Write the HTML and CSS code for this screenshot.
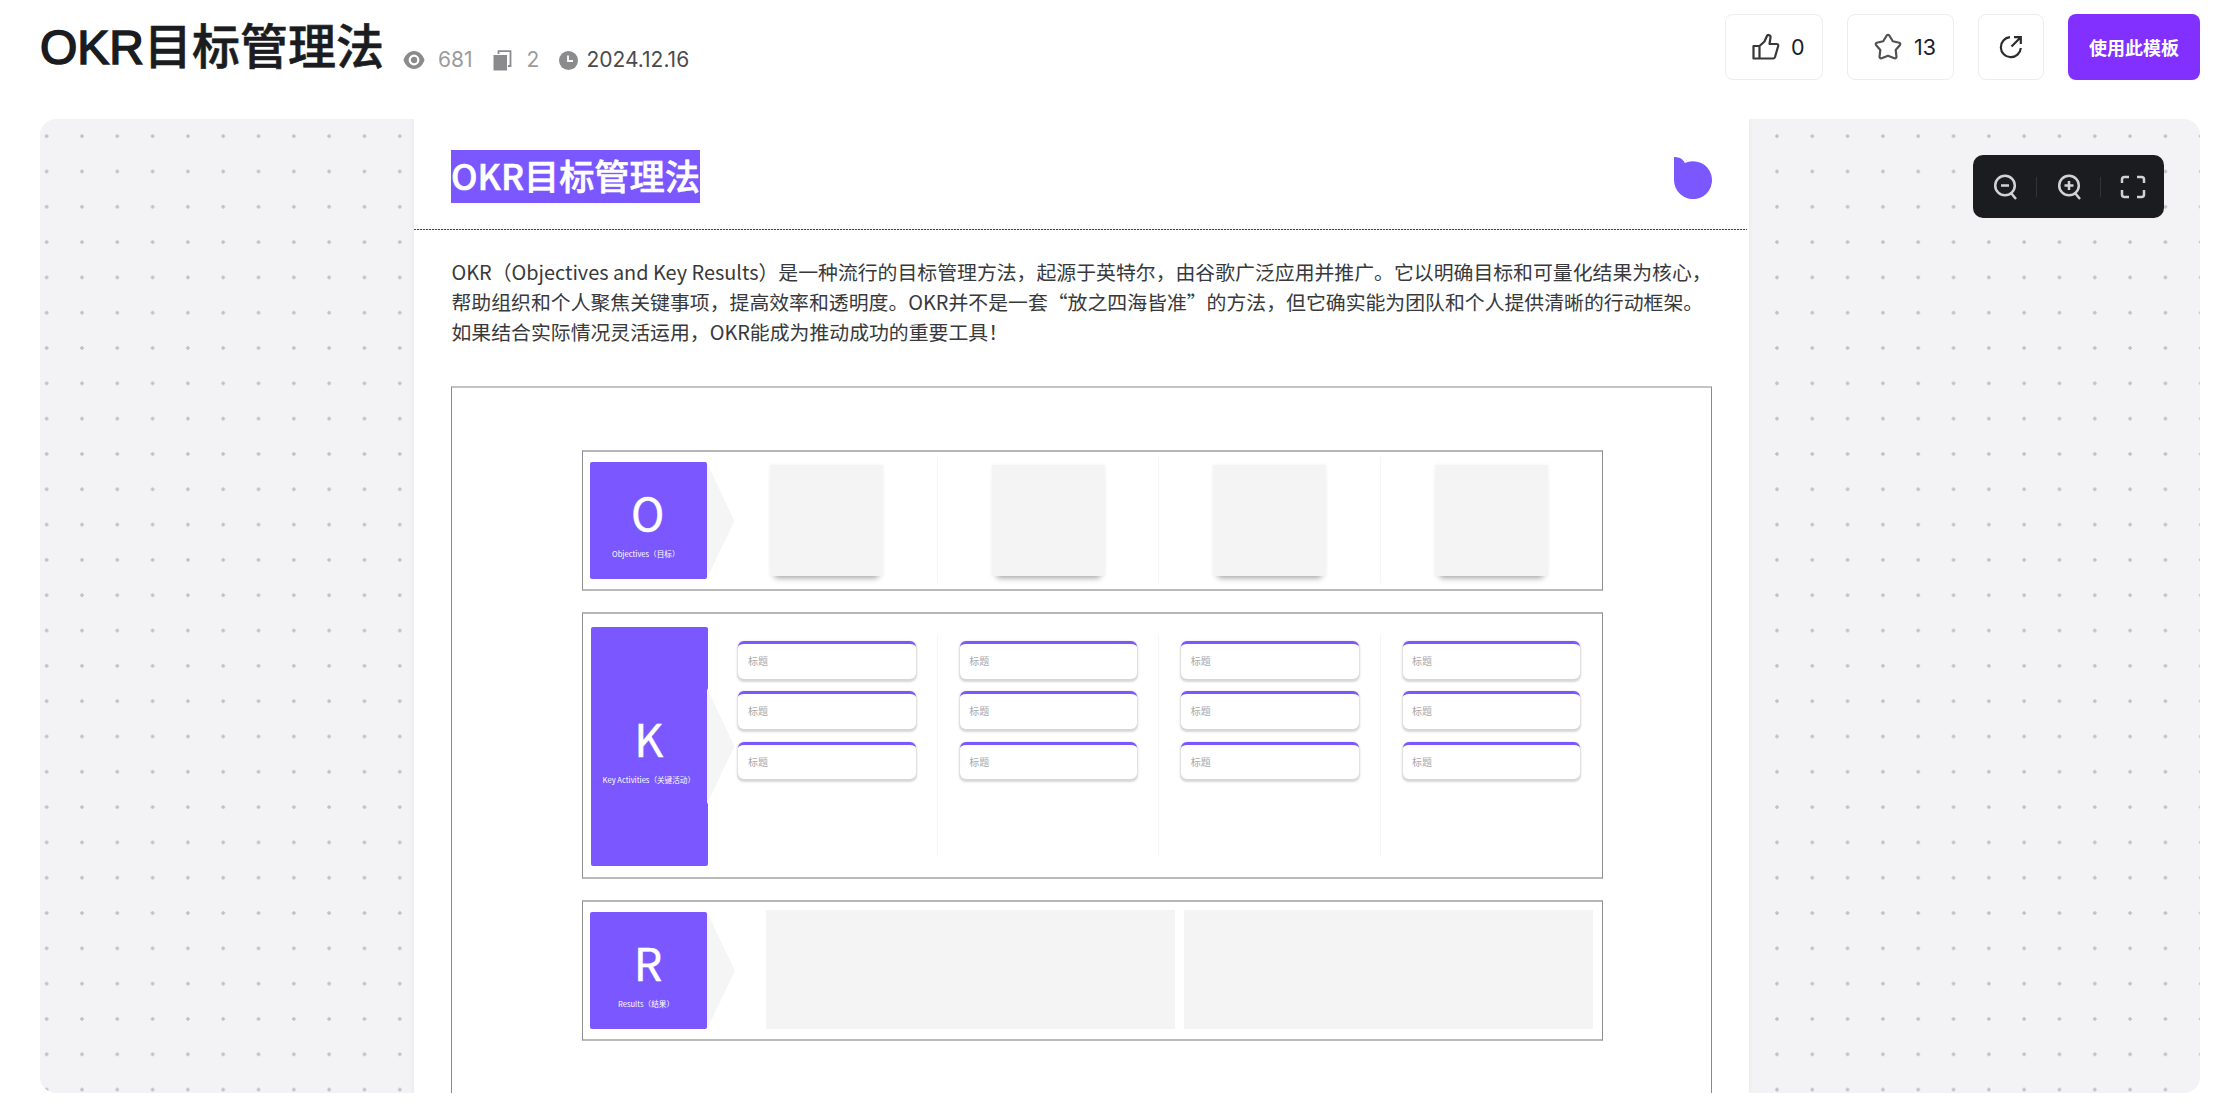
FILE: index.html
```html
<!DOCTYPE html>
<html lang="zh-CN">
<head>
  <meta charset="UTF-8">
  <meta name="viewport" content="width=device-width, initial-scale=1.0">
  <title>OKR目标管理法</title>
  <link rel="stylesheet" href="styles.css">
</head>
<body>
  <header class="header">
    <h1 class="title"><span class="latin">OKR</span>目标管理法</h1>
    <div class="meta">
      <span class="meta-item views">
        <svg width="22" height="20" viewBox="0 0 22 20"><path fill="#8b8b8d" d="M11 1C6 1 2 5 .5 10 2 15 6 19 11 19s9-4 10.500-9C20 5 16 1 11 1z"/><circle cx="11" cy="10" r="4.300" fill="none" stroke="#fff" stroke-width="2.200"/></svg>
        681
      </span>
      <span class="meta-item copies">
        <svg width="19" height="21" viewBox="0 0 19 21"><path fill="none" stroke="#8b8b8d" stroke-width="1.800" d="M5.500 4V1.200h12V16H15"/><path fill="#8b8b8d" d="M.5 5H14v15.500H.5z"/></svg>
        2
      </span>
      <span class="meta-item date">
        <svg width="19" height="19" viewBox="0 0 19 19"><circle cx="9.500" cy="9.500" r="9.500" fill="#8b8b8d"/><path fill="none" stroke="#fff" stroke-width="1.800" d="M9 4.500v5.500h5"/></svg>
        2024.12.16
      </span>
    </div>
    <div class="actions">
      <button class="btn like">
        <svg width="28" height="28" viewBox="0 0 28 28" fill="none" stroke="#37373a" stroke-width="2.200" stroke-linejoin="round"><path d="M1.500 13h6v12.500h-6zM7.500 13l5-4.500 2.300-5.300c1-2.200 4.200-1 3.700 1.300L17.500 11H24.500q2 0 1.700 2L23 24q-.5 1.500-2 1.500H7.500"/></svg>
        <span>0</span>
      </button>
      <button class="btn star">
        <svg width="28" height="28" viewBox="0 0 28 28" fill="none" stroke="#515154" stroke-width="2.200" stroke-linejoin="round"><path d="M12.700 2.500q1.300-1.500 2.600 0l3.500 5.800 6.500 1.500q1.500.7.700 2.200l-4.300 5 .8 6.800q-.3 1.900-2.200 1.400L14 22.800l-6.300 2.400q-1.900.5-2.200-1.400l.8-6.800L2 12q-.8-1.500.7-2.200l6.500-1.500z"/></svg>
        <span>13</span>
      </button>
      <button class="btn share">
        <svg width="26" height="26" viewBox="0 0 26 26" fill="none" stroke="#2b2b2e" stroke-width="2.200"><path d="M12 3.200A10 10 0 1 0 22.800 14M13.500 12.500 22 4M16 3.200h6.800V10"/></svg>
      </button>
      <button class="btn primary">使用此模板</button>
    </div>
  </header>

  <main class="stage">
    <article class="page">
      <div class="page-head">
        <h2 class="page-title">OKR目标管理法</h2>
        <svg class="logo" width="38" height="42" viewBox="0 0 38 42"><path fill="#7b57ff" d="M0 0c5.500 0 9 2 10.800 6A19 19 0 1 1 0 22.800z"/></svg>
      </div>
      <div class="dotted"></div>
      <p class="intro">OKR（Objectives and Key Results）是一种流行的目标管理方法，起源于英特尔，由谷歌广泛应用并推广。它以明确目标和可量化结果为核心，<br>帮助组织和个人聚焦关键事项，提高效率和透明度。OKR并不是一套“放之四海皆准”的方法，但它确实能为团队和个人提供清晰的行动框架。<br>如果结合实际情况灵活运用，OKR能成为推动成功的重要工具！</p>

      <div class="frame">
        <section class="row objectives">
          <div class="tile"><b>O</b><small>Objectives（目标）</small></div>
          <i class="arrow"></i>
          <div class="cols">
            <div class="col"><div class="note"></div></div>
            <div class="col"><div class="note"></div></div>
            <div class="col"><div class="note"></div></div>
            <div class="col"><div class="note"></div></div>
          </div>
        </section>

        <section class="row keys">
          <div class="tile"><b>K</b><small>Key Activities（关键活动）</small></div>
          <i class="arrow"></i>
          <div class="cols">
            <div class="col">
              <div class="card">标题</div>
              <div class="card">标题</div>
              <div class="card">标题</div>
            </div>
            <div class="col">
              <div class="card">标题</div>
              <div class="card">标题</div>
              <div class="card">标题</div>
            </div>
            <div class="col">
              <div class="card">标题</div>
              <div class="card">标题</div>
              <div class="card">标题</div>
            </div>
            <div class="col">
              <div class="card">标题</div>
              <div class="card">标题</div>
              <div class="card">标题</div>
            </div>
          </div>
        </section>

        <section class="row results">
          <div class="tile"><b>R</b><small>Results（结果）</small></div>
          <i class="arrow"></i>
          <div class="result"></div>
          <div class="result"></div>
        </section>
      </div>
    </article>

    <div class="toolbar">
      <button class="tool"><svg width="26" height="30" viewBox="0 0 26 30"><circle cx="13" cy="13.500" r="9.800"/><path d="m19 21 5 6M9 13.500h8"/></svg></button>
      <button class="tool"><svg width="26" height="30" viewBox="0 0 26 30"><circle cx="13" cy="13.500" r="9.800"/><path d="m19 21 5 6M8.500 13.500h9M13 9v9"/></svg></button>
      <button class="tool"><svg width="26" height="26" viewBox="0 0 26 26"><path d="M2 9V5.500Q2 3 4.500 3H9M17 3h4.500Q24 3 24 5.500V9M24 16v4.500q0 2.500-2.500 2.500H17M9 23H4.500Q2 23 2 20.500V16"/></svg></button>
    </div>
  </main>
</body>
</html>
```

FILE: styles.css
```css
* {
  box-sizing: border-box;
}
body {
  margin: 0;
  padding: 0 40px;
  height: 1112px;
  overflow: hidden;
  background: #fff;
  font-family: Inter, "Noto Sans CJK SC", sans-serif;
  color: #1b1c1f;
}
button {
  border: 0;
  padding: 0;
  background: none;
  font: inherit;
  color: inherit;
}
svg {
  display: block;
  flex: none;
}

/* header */
.header {
  display: flex;
  height: 119px;
}
.title {
  margin: 12px 0 0;
  font-family: "Liberation Sans", "Noto Sans CJK SC", sans-serif;
  font-size: 48px;
  line-height: 72px;
  font-weight: 500;
  white-space: nowrap;
  -webkit-text-stroke: .6px #1b1c1f;
}
.latin {
  -webkit-text-stroke-width: 1.600px;
}
.meta {
  display: flex;
  padding: 45px 0 0 19px;
  font-size: 21px;
  line-height: 30px;
  color: #9b9b9d;
}
.meta-item {
  display: flex;
  align-items: center;
  height: 30px;
}
.views {
  gap: 13px;
  margin-right: 20px;
}
.copies {
  gap: 15px;
  margin-right: 20px;
}
.date {
  gap: 8px;
  color: #4b4b4e;
}
.actions {
  display: flex;
  gap: 24px;
  margin-left: auto;
  padding-top: 14px;
}
.btn {
  display: flex;
  align-items: center;
  height: 66px;
  border: 1px solid #ededee;
  border-radius: 8px;
  font-size: 21.500px;
}
.like {
  width: 98px;
  padding-left: 26px;
  gap: 11px;
}
.star {
  width: 107px;
  padding-left: 26px;
  gap: 12px;
}
.share {
  width: 66px;
  justify-content: center;
}
.primary {
  width: 132px;
  justify-content: center;
  border: 0;
  background: #8130ff;
  color: #fff;
  font-size: 18px;
  font-weight: 700;
}

/* canvas with dot grid */
.stage {
  position: relative;
  height: 974px;
  overflow: hidden;
  border-radius: 16px;
  background: radial-gradient(circle at center, #c0c1c4 1.400px, transparent 2.100px) -11px -.5px / 35.320px 35.320px #f3f3f5;
}
.page {
  width: 1335.500px;
  height: 974px;
  margin-left: 373.500px;
  background: #fff;
  box-shadow: 0 0 5px rgba(0, 0, 0, .06);
  font-family: "Noto Sans CJK SC", sans-serif;
}
.page-head {
  display: flex;
  justify-content: space-between;
  align-items: flex-start;
  height: 110px;
  padding: 31px 37.500px 0;
}
.page-title {
  height: 53px;
  margin: 0;
  background: #7b57ff;
  color: #fff;
  font-size: 35.200px;
  line-height: 50px;
  font-weight: 500;
  -webkit-text-stroke: .6px #fff;
}
.logo {
  margin-top: 7px;
}
.dotted {
  width: 1333px;
  height: 1px;
  background: repeating-linear-gradient(90deg, #454547 0 2px, #e4e4e4 2px 3px);
}
.intro {
  margin: 27px 0 0 38px;
  color: #38393b;
  font-size: 19.870px;
  line-height: 29.900px;
  white-space: nowrap;
}

/* okr board */
.frame {
  width: 1260.500px;
  height: 730px;
  margin: 39.500px 0 0 37.500px;
  padding: 62px 0 0 130px;
  border: 1px solid #8a8a8a;
  border-top: 2px solid #c4c4c4;
}
.row {
  display: flex;
  width: 1021px;
  height: 141px;
  margin-bottom: 21px;
  border: 1px solid #8e8e8e;
  border-top: 2px solid #b5b5b5;
  border-bottom: 2px solid #b9b9b9;
}
.tile {
  display: flex;
  flex-direction: column;
  align-items: center;
  width: 117px;
  height: 117px;
  margin: 10px 0 0 7px;
  padding-top: 17.500px;
  padding-right: 1px;
  border-radius: 2px;
  background: #7b57ff;
  color: #fff;
}
.tile b {
  font-size: 45px;
  line-height: 64px;
  font-weight: 400;
  -webkit-text-stroke: .4px #fff;
}
.tile small {
  margin-top: 4px;
  font-size: 7.600px;
  line-height: 12px;
  white-space: nowrap;
}
.objectives .tile small,
.results .tile small {
  padding-right: 4px;
}
.arrow {
  width: 28px;
  height: 117px;
  margin-top: 10px;
  background: #f5f5f5;
  clip-path: polygon(0 0, 100% 50%, 0 100%);
}
.cols {
  display: flex;
  height: 126px;
  margin: 5px 0 0 -18px;
}
.col {
  width: 221.400px;
  border-right: 1px solid #f6f6f6;
}
.col:last-child {
  border-right: 0;
}
.note {
  width: 113px;
  height: 111px;
  margin: 8px 0 0 54px;
  background: #f4f4f4;
  box-shadow: 0 7px 6px -5px rgba(0, 0, 0, .35), 0 0 4px rgba(0, 0, 0, .05);
}
.keys {
  height: 267px;
}
.keys .tile {
  height: 239px;
  margin: 13px 0 0 8px;
  padding-top: 78.500px;
}
.keys .arrow {
  height: 118px;
  margin: 73px 0 0 -1px;
}
.keys .cols {
  height: 223px;
  margin: 20px 0 0 -18px;
}
.card {
  width: 177.500px;
  height: 37.500px;
  margin: 0 0 12.700px 22px;
  padding-left: 9.500px;
  border-top: 3px solid #7b57ff;
  border-radius: 6px;
  background: #fff;
  box-shadow: 0 1.500px 2px 1px rgba(0, 0, 0, .16);
  color: #a9a9ab;
  font-size: 10px;
  line-height: 34px;
}
.keys .col {
  padding-top: 7px;
}
.result {
  width: 409px;
  height: 119px;
  margin: 8px 8.500px 0 0;
  background: #f4f4f4;
}
.arrow + .result {
  margin-left: 31px;
}

/* zoom controls */
.toolbar {
  position: absolute;
  top: 36px;
  right: 36px;
  display: flex;
  align-items: center;
  width: 191px;
  height: 63px;
  border-radius: 10px;
  background: #1b1c1f;
}
.tool {
  display: flex;
  flex: 1;
  align-items: center;
  justify-content: center;
  height: 20px;
  border-right: 1px solid #323336;
}
.tool:last-child {
  border-right: 0;
}
.tool svg {
  fill: none;
  stroke: #d2d2d4;
  stroke-width: 2.500;
}
```
